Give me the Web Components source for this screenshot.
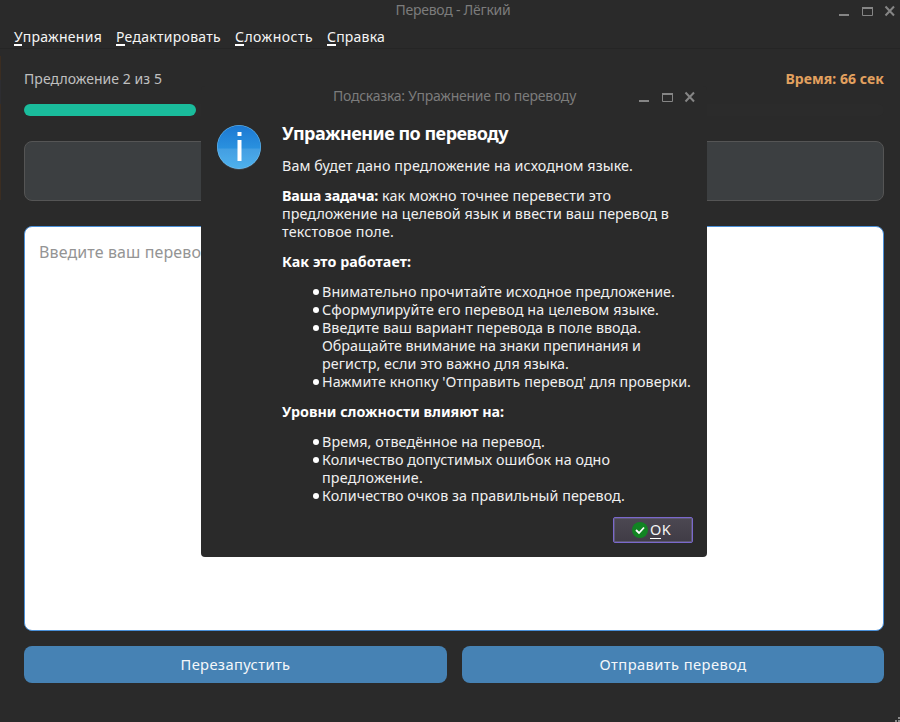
<!DOCTYPE html>
<html lang="ru">
<head>
<meta charset="utf-8">
<title>Перевод - Лёгкий</title>
<style>
html,body{margin:0;height:100%;background:#2a2a2a;overflow:hidden}
body{font-family:"Noto Sans","Liberation Sans",sans-serif;color:#fff}
</style>
</head>
<body>
<translation-window></translation-window>
<script>
// One line of text, tracked so that it fills the width given in the w attribute.
customElements.define('fit-text', class extends HTMLElement {
  connectedCallback() {
    if (this.shadowRoot) return;
    this.attachShadow({mode: 'open'}).innerHTML =
      '<style>:host{display:block;flex:none}span{display:inline-block;white-space:pre;vertical-align:top}</style><span><slot></slot></span>';
    const w = +this.getAttribute('w'), s = this.shadowRoot.querySelector('span');
    const n = this.textContent.length;
    s.style.letterSpacing = ((w - s.getBoundingClientRect().width) / n).toFixed(3) + 'px';
    this.style.width = w + 'px';
  }
});

customElements.define('window-bar', class extends HTMLElement {
  connectedCallback() {
    this.attachShadow({mode: 'open'}).innerHTML = `
      <style>
        :host{display:grid;grid-template-columns:1fr auto;align-items:start;height:22px;color:#7c7c7c;font-size:14px;line-height:20px}
        ::slotted(*){grid-area:1/1/2/3;justify-self:center}
        svg{grid-area:1/2;display:block}
      </style>
      <slot></slot>
      <svg width="58" height="22" fill="none" stroke="#858585">
        <path d="M0 15h10" stroke-width="2"/>
        <path d="M23.500 7v8.500h10V7" /><path d="M23 8h11" stroke-width="2"/>
        <path d="M46.500 6.500l8.500 9M55 6.500l-8.500 9" stroke-width="2"/>
      </svg>`;
  }
});

customElements.define('menu-item', class extends HTMLElement {
  connectedCallback() {
    this.attachShadow({mode: 'open'}).innerHTML = `
      <style>
        :host{display:block;position:relative;height:22px;line-height:20px;font-size:14px;color:#f5f5f5}
        i{position:absolute;left:0;top:17px;height:2px;width:${this.getAttribute('u')}px;background:#fff}
      </style><slot></slot><i></i>`;
  }
});

customElements.define('progress-line', class extends HTMLElement {
  connectedCallback() {
    this.attachShadow({mode: 'open'}).innerHTML = `
      <style>:host{display:block;height:12px;border-radius:6px;background:#2b2b2b}
      b{display:block;width:172px;height:12px;border-radius:6px;background:#1abc9c}</style><b></b>`;
  }
});

customElements.define('action-button', class extends HTMLElement {
  connectedCallback() {
    this.attachShadow({mode: 'open'}).innerHTML = `
      <style>:host{display:flex;justify-content:center;height:37px;line-height:36px;border-radius:8px;background:#4682b4;font-size:14.700px;color:#f4f7fa}</style><slot></slot>`;
  }
});

customElements.define('bullet-item', class extends HTMLElement {
  connectedCallback() {
    this.attachShadow({mode: 'open'}).innerHTML = `
      <style>:host{display:grid;grid-template-columns:9px 1fr;margin-left:31px}
      i{width:6px;height:6px;border-radius:50%;background:#fff;margin-top:6px}
      div{display:flex;flex-direction:column}</style><i></i><div><slot></slot></div>`;
  }
});

customElements.define('ok-button', class extends HTMLElement {
  connectedCallback() {
    this.attachShadow({mode: 'open'}).innerHTML = `
      <style>
        :host{display:flex;box-sizing:border-box;width:80px;height:26px;border:1px solid #7a68cc;border-radius:2px;
          background:linear-gradient(#4c4852,#403c46);box-shadow:inset 0 0 0 1px #5d5872;padding-left:18px;gap:2px;align-items:center;font-size:14.500px;line-height:22px;color:#f4f4f4}
        .t{position:relative;margin-top:-2px}.t i{position:absolute;left:0;top:20px;width:11px;height:1px;background:#fff}
      </style>
      <svg width="16" height="16"><circle cx="8" cy="8" r="8" fill="#128423"/><path d="M4 8l3 3 5-5.500" fill="none" stroke="#fff" stroke-width="1.800"/></svg>
      <span class="t"><fit-text w="21">OK</fit-text><i></i></span>`;
  }
});

customElements.define('hint-dialog', class extends HTMLElement {
  connectedCallback() {
    this.attachShadow({mode: 'open'}).innerHTML = `
      <style>
        :host{display:block;box-sizing:border-box;width:506px;height:471px;background:#2a2a2a;border-radius:4px}
        window-bar{padding-right:10px}
        window-bar fit-text{margin-left:11px}
        .body{display:grid;grid-template-columns:66px 1fr;padding:14px 0 0 15px}
        .info{margin-top:1px}
        .copy{display:flex;flex-direction:column;gap:12px;font-size:14.300px;line-height:18px;color:#f0f0f0}
        h2{font-size:18px;line-height:23px;margin:0;font-weight:700;color:#fff}
        p,section{margin:0;display:flex;flex-direction:column}
        .row{display:flex;gap:4px}
        b{color:#fff;font-weight:700;height:18px}
        footer{display:flex;justify-content:flex-end;padding:12px 14px 0}
      </style>
      <window-bar><fit-text w="243">Подсказка: Упражнение по переводу</fit-text></window-bar>
      <div class="body">
        <svg class="info" width="48" height="48" viewBox="0 0 48 48">
          <defs><linearGradient id="g" x2="0" y2="1"><stop stop-color="#1c78d2"/><stop offset="1" stop-color="#36a7ea"/></linearGradient></defs>
          <circle cx="23" cy="24.500" r="22" fill="#172c3c"/>
          <circle cx="23" cy="24" r="22" fill="#6bbcf0"/>
          <circle cx="23" cy="24" r="21.500" fill="url(#g)"/>
          <path d="M1.500 25.500h43a21.500 21.500 0 0 1-43 0z" fill="#fff" opacity=".12"/>
          <path d="M21.500 9h4v4h-4zM21.500 17h4v21h-4z" fill="#fff"/>
        </svg>
        <div class="copy">
          <h2><fit-text w="226">Упражнение по переводу</fit-text></h2>
          <p><fit-text w="351">Вам будет дано предложение на исходном языке.</fit-text></p>
          <p><span class="row"><b><fit-text w="96">Ваша задача:</fit-text></b><fit-text w="229">как можно точнее перевести это</fit-text></span>
            <fit-text w="387">предложение на целевой язык и ввести ваш перевод в</fit-text>
            <fit-text w="112">текстовое поле.</fit-text></p>
          <p><b><fit-text w="129">Как это работает:</fit-text></b></p>
          <section>
            <bullet-item><fit-text w="353">Внимательно прочитайте исходное предложение.</fit-text></bullet-item>
            <bullet-item><fit-text w="337">Сформулируйте его перевод на целевом языке.</fit-text></bullet-item>
            <bullet-item><fit-text w="319">Введите ваш вариант перевода в поле ввода.</fit-text><fit-text w="319">Обращайте внимание на знаки препинания и</fit-text><fit-text w="247">регистр, если это важно для языка.</fit-text></bullet-item>
            <bullet-item><fit-text w="369">Нажмите кнопку 'Отправить перевод' для проверки.</fit-text></bullet-item>
          </section>
          <p><b><fit-text w="222">Уровни сложности влияют на:</fit-text></b></p>
          <section>
            <bullet-item><fit-text w="223">Время, отведённое на перевод.</fit-text></bullet-item>
            <bullet-item><fit-text w="288">Количество допустимых ошибок на одно</fit-text><fit-text w="101">предложение.</fit-text></bullet-item>
            <bullet-item><fit-text w="303">Количество очков за правильный перевод.</fit-text></bullet-item>
          </section>
        </div>
      </div>
      <footer><ok-button></ok-button></footer>`;
  }
});

customElements.define('translation-window', class extends HTMLElement {
  connectedCallback() {
    this.attachShadow({mode: 'open'}).innerHTML = `
      <style>
        :host{display:flex;flex-direction:column;position:relative;width:900px;height:722px;background:#2a2a2a;overflow:hidden}
        :host>window-bar{padding-right:3px;height:22px}
        nav{display:flex;gap:14px;height:27px;box-sizing:border-box;padding:5px 0 0 14px;border-bottom:1px solid #252525}
        main{display:flex;flex-direction:column;padding:19px 16px 0 24px}
        .status{display:flex;justify-content:space-between;height:36px;line-height:22px;font-size:14px;color:#c0c0c0}
        .time{color:#e3a15f;font-weight:700}
        .source{box-sizing:border-box;height:60px;margin-top:25px;border:1px solid #555;border-radius:8px;background:#3c3f41}
        .answer{box-sizing:border-box;height:405px;margin-top:25px;border:1px solid #4a90d9;border-radius:8px;background:#fff;padding:14px;font-size:16px;line-height:22px;color:#949494}
        .actions{display:grid;grid-template-columns:423px 422px;gap:15px;margin-top:15px}
        hint-dialog{position:absolute;left:201px;top:86px}
        .edge{position:absolute;left:0;top:56px;width:1px;height:144px;background:linear-gradient(#3b2d21 24px,#2d2d31 24px 48px,#3b2d21 48px)}
        .grip{position:absolute;right:0;bottom:0}
      </style>
      <window-bar><fit-text w="115" style="margin-left:9px">Перевод - Лёгкий</fit-text></window-bar>
      <nav>
        <menu-item u="8"><fit-text w="88">Упражнения</fit-text></menu-item>
        <menu-item u="9"><fit-text w="105">Редактировать</fit-text></menu-item>
        <menu-item u="9"><fit-text w="78">Сложность</fit-text></menu-item>
        <menu-item u="9"><fit-text w="58">Справка</fit-text></menu-item>
      </nav>
      <main>
        <div class="status"><fit-text w="138">Предложение 2 из 5</fit-text><fit-text class="time" w="98.500">Время: 66 сек</fit-text></div>
        <progress-line></progress-line>
        <div class="source"></div>
        <div class="answer"><fit-text w="162">Введите ваш перево</fit-text></div>
        <div class="actions">
          <action-button><fit-text w="110">Перезапустить</fit-text></action-button>
          <action-button><fit-text w="147">Отправить перевод</fit-text></action-button>
        </div>
      </main>
      <i class="edge"></i>
      <svg class="grip" width="6" height="6" fill="#8a8a8a"><path d="M4 1h2v2H4zM1 4h2v2H1zM4 4h2v2H4z"/></svg>
      <hint-dialog></hint-dialog>`;
  }
});
</script>
</body>
</html>
